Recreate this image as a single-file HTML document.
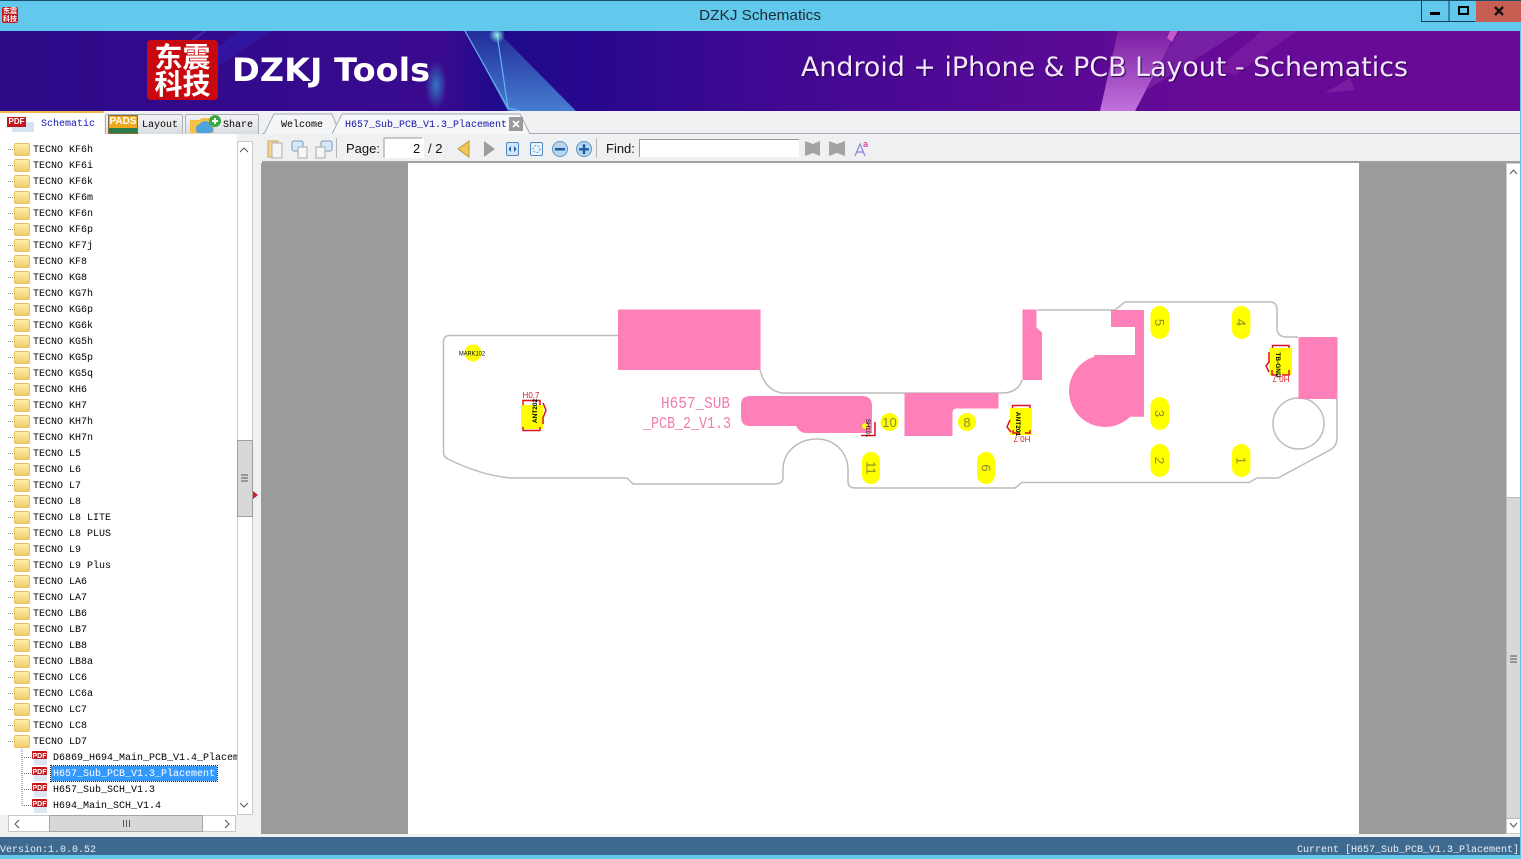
<!DOCTYPE html>
<html><head><meta charset="utf-8"><title>DZKJ Schematics</title>
<style>
*{box-sizing:border-box}
html,body{margin:0;padding:0;width:1521px;height:859px;overflow:hidden;background:#f0f0f0;font-family:"Liberation Sans",sans-serif}
.a{position:absolute}
.m{font-family:"Liberation Mono","Noto Sans CJK SC",monospace;font-size:10px;white-space:pre;color:#000}
#tree{left:0;top:143px;width:237px;height:672px;overflow:hidden}
#tree div{position:relative;height:16px;line-height:16px;padding-left:33px;font-family:"Liberation Mono",monospace;font-size:10px;white-space:pre;color:#000}
#tree div::before{content:"";position:absolute;left:14px;top:0;width:14px;height:11px;background:linear-gradient(#fdeea8,#f3cf6c);border:1px solid #e3c060;border-radius:2px}
#tree div::after{content:"";position:absolute;left:8px;top:6px;width:5px;border-top:1px dotted #888}
.f{position:absolute;left:53px;height:16px;line-height:16px;font-family:"Liberation Mono",monospace;font-size:10px;white-space:pre;color:#000}
.tab{position:absolute;top:114px;height:20px;background:linear-gradient(#f4f4f4,#d9dde2);border:1px solid #a9b2bb;border-bottom:0;border-radius:2px 2px 0 0}
</style></head><body>

<!-- title bar -->
<div class="a" style="left:0;top:0;width:1521px;height:31px;background:#62c9ec;border-top:1px solid #17506b"></div>
<div class="a" style="left:2px;top:7px;width:16px;height:16px;background:#c4161c;border-radius:2px;color:#fff;font:bold 7px/8px 'Noto Sans CJK SC',sans-serif;text-align:center">东震<br>科技</div>
<svg class="a" style="left:0;top:0" width="1521" height="31">
<text x="760" y="20" text-anchor="middle" font-family="Liberation Sans" font-size="15" fill="#1d2b33" textLength="122" lengthAdjust="spacingAndGlyphs">DZKJ Schematics</text>
<path d="M1421.5 1V21.5H1475.5M1449 1V21.5" fill="none" stroke="#123d55" stroke-width="1"/>
<rect x="1476" y="1" width="45" height="21" fill="#c65e52"/>
<rect x="1430" y="12" width="10" height="3" fill="#000"/>
<rect x="1459" y="7" width="9" height="7" fill="none" stroke="#000" stroke-width="2"/>
<path d="M1495 7L1503 15M1503 7L1495 15" stroke="#111" stroke-width="2.4"/>
</svg>

<!-- banner -->
<svg class="a" style="left:0;top:31px" width="1521" height="80" viewBox="0 31 1521 80">
<defs>
<linearGradient id="bg" x1="0" x2="1" y1="0" y2="0">
<stop offset="0" stop-color="#2b0a88"/><stop offset=".29" stop-color="#3a0a8e"/><stop offset=".325" stop-color="#1f0a8c"/><stop offset=".4" stop-color="#2a088e"/><stop offset=".5" stop-color="#3f0892"/><stop offset=".65" stop-color="#520a95"/><stop offset=".8" stop-color="#670a97"/><stop offset="1" stop-color="#680a96"/>
</linearGradient>
<linearGradient id="beam" x1="0" x2="0" y1="0" y2="1"><stop offset="0" stop-color="#22309c"/><stop offset="1" stop-color="#4a8ad8"/></linearGradient>
<radialGradient id="glow"><stop offset="0" stop-color="#2fa6d8" stop-opacity=".7"/><stop offset="1" stop-color="#2fa6d8" stop-opacity="0"/></radialGradient>
<radialGradient id="spark"><stop offset="0" stop-color="#8df0e8"/><stop offset="1" stop-color="#8df0e8" stop-opacity="0"/></radialGradient>
<linearGradient id="pb" x1="0" x2="0" y1="0" y2="1"><stop offset="0" stop-color="#7a1ea2"/><stop offset="1" stop-color="#c272dc"/></linearGradient>
</defs>
<rect x="0" y="31" width="1521" height="80" fill="url(#bg)"/>
<path d="M240 31L270 31L190 85L165 85Z" fill="#3018ac" opacity=".7"/>
<path d="M203 31L207 31L170 60L165 58Z" fill="#4a3ac0" opacity=".5"/>
<ellipse cx="436" cy="85" rx="11" ry="24" fill="url(#glow)"/>
<path d="M465 31L497 31L576 111L508 111Z" fill="url(#beam)" opacity=".9"/>
<path d="M465 31L508 108M497 34L508 108L520 111" fill="none" stroke="#63b4ea" stroke-width="1.2"/>
<circle cx="497" cy="35" r="8" fill="url(#spark)"/>
<path d="M1118 31L1177 31L1135 111L1100 111Z" fill="url(#pb)"/>
<path d="M1170 31L1178 31L1172 42L1167 38Z" fill="#d868d0" opacity=".8"/>
<path d="M1180 31L1240 31L1147 90L1160 62Z" fill="#7d2aa8" opacity=".7"/>
<path d="M1262 31L1297 31L1235 75L1215 70Z" fill="#7d1ca2" opacity=".8"/>
<path d="M1325 93L1350 78L1355 90Z" fill="#7d1ca2"/>
<text x="232" y="81" font-family="DejaVu Sans" font-weight="bold" font-size="32" fill="#fff" textLength="198" lengthAdjust="spacingAndGlyphs">DZKJ Tools</text>
<text x="801" y="76" font-family="DejaVu Sans" font-size="27" fill="#f4e6fa" textLength="607" lengthAdjust="spacingAndGlyphs" style="text-shadow:1px 1px 1px #2a0050">Android + iPhone &amp; PCB Layout - Schematics</text>
</svg>
<div class="a" style="left:147px;top:40px;width:71px;height:60px;background:#c80a10;border-radius:4px;color:#fff;font:bold 28px/27px 'Noto Sans CJK SC',sans-serif;text-align:center;padding-top:3px;letter-spacing:0">东震<br>科技</div>

<!-- tabs row -->
<div class="a" style="left:0;top:111px;width:1521px;height:24px;background:#f0f0f2"></div>
<div class="a" style="left:262px;top:133px;width:1259px;height:1px;background:#a4acb3"></div>
<div class="a" style="left:0;top:111px;width:104px;height:24px;background:#fff;border-top:2px solid #f2b34a"></div>
<div class="a" style="left:12px;top:122px;width:22px;height:10px;background:#d6e4f2"></div>
<div class="a" style="left:7px;top:117px;width:19px;height:10px;background:#c4141c;color:#fff;font:bold 8px/10px 'Liberation Sans';text-align:center">PDF</div>
<div class="a m" style="left:41px;top:118px;color:#1212b4;line-height:14px">Schematic</div>
<div class="tab" style="left:105px;width:78px"></div>
<div class="a" style="left:108px;top:115px;width:30px;height:19px;background:#f0a81e;border:1px solid #8a6a30;color:#fff;font:bold 10px/12px 'Liberation Sans';text-align:center">PADS<div style="height:5px;background:#2c7a4a"></div></div>
<div class="a m" style="left:142px;top:119px;line-height:14px">Layout</div>
<div class="tab" style="left:185px;width:74px"></div>
<svg class="a" style="left:189px;top:113px" width="34" height="21"><path d="M1 7H10L13 5H25V20H1Z" fill="#f6bf45"/><path d="M9 20a5 5 0 0 1 2-9 6 6 0 0 1 11 2 4 4 0 0 1 0 7Z" fill="#4ea3dc"/><circle cx="26" cy="8" r="6" fill="#39a83e"/><path d="M23 8H29M26 5V11" stroke="#fff" stroke-width="2"/></svg>
<div class="a m" style="left:223px;top:119px;line-height:14px">Share</div>
<svg class="a" style="left:262px;top:111px" width="280" height="24">
<path d="M2 23L12 3H70L78 23" fill="#f4f5f6" stroke="#a4acb3"/>
<path d="M70 23L80 3H258L268 23" fill="#f6f7f8" stroke="#a4acb3"/>
<rect x="247" y="6" width="14" height="14" fill="#9a9a9a"/>
<path d="M251 10L257 16M257 10L251 16" stroke="#fff" stroke-width="1.8"/>
</svg>
<div class="a m" style="left:281px;top:119px;line-height:14px">Welcome</div>
<div class="a m" style="left:345px;top:119px;line-height:14px;color:#1212a8">H657_Sub_PCB_V1.3_Placement</div>

<!-- toolbar -->
<div class="a" style="left:262px;top:134px;width:1259px;height:27px;background:#eff0f2"></div>
<div class="a" style="left:262px;top:161px;width:1259px;height:2px;background:#a0a0a0"></div>
<svg class="a" style="left:262px;top:134px" width="620" height="28">
<path d="M6 7H16V23H6Z" fill="#f2d59a" stroke="#c9a860"/><path d="M10 9H20V24H10Z" fill="#f4f4f4" stroke="#b0b0b0"/>
<rect x="30" y="7" width="11" height="10" rx="2" fill="#d8e8f6" stroke="#7a9cc0"/><rect x="36" y="13" width="9" height="11" fill="#f6f6f6" stroke="#aaa"/>
<rect x="59" y="7" width="11" height="10" rx="2" fill="#d8e8f6" stroke="#7a9cc0"/><rect x="54" y="13" width="9" height="11" fill="#f6f6f6" stroke="#aaa"/>
<path d="M74.500 4V24" stroke="#b5b5b5"/>
<rect x="122" y="4" width="40" height="20" fill="#fff"/>
<path d="M122 24V4H160" fill="none" stroke="#9a9a9a"/>
<path d="M207 7V23L196 15Z" fill="#f0c75a" stroke="#c09a3a"/>
<path d="M222 7V23L233 15Z" fill="#9c9c9c"/>
<rect x="244.500" y="8.500" width="12" height="13" rx="1.500" fill="#d4e6f6" stroke="#4f86c0"/>
<path d="M249 12V18L246.500 15ZM252 12V18L254.500 15Z" fill="#1f5f9f"/>
<rect x="268.500" y="8.500" width="12" height="13" rx="1.500" fill="#eaf2fa" stroke="#4f86c0"/>
<circle cx="274.500" cy="15" r="3.500" fill="none" stroke="#6a9cc8" stroke-dasharray="2 1.500"/>
<circle cx="298" cy="15" r="7.500" fill="#b6d6ee" stroke="#5f97c8"/><rect x="293" y="14" width="10" height="2.500" fill="#1f5f9f"/>
<circle cx="322" cy="15" r="7.500" fill="#b6d6ee" stroke="#5f97c8"/><path d="M317 15.300H327M322 10.300V20.300" stroke="#1f5f9f" stroke-width="2.400"/>
<path d="M334.500 4V24" stroke="#b5b5b5"/>
<rect x="377" y="5" width="160" height="18" fill="#fff"/>
<path d="M377.500 23V5.500H537" fill="none" stroke="#9a9a9a"/>
<path d="M543 7L551 10L558 7V22L551 19L543 22Z" fill="#a3a3a3"/>
<path d="M567 7L575 10L583 7V22L575 19L567 22Z" fill="#a3a3a3"/>
<path d="M593 22L598 10L603 22M595 18H601" fill="none" stroke="#8a80d8" stroke-width="1.200"/>
<text x="601" y="13" font-family="Liberation Sans" font-size="9" font-weight="bold" fill="#d0489a">a</text>
<text x="84" y="19" font-family="Liberation Sans" font-size="13" fill="#111">Page:</text>
<text x="151" y="19" font-family="Liberation Sans" font-size="13" fill="#111">2</text>
<text x="166" y="19" font-family="Liberation Sans" font-size="13" fill="#111">/ 2</text>
<text x="344" y="19" font-family="Liberation Sans" font-size="13" fill="#111">Find:</text>
</svg>

<!-- tree -->
<div class="a" style="left:0;top:134px;width:237px;height:681px;background:#fff"></div>
<div class="a" id="tree">
<div>TECNO KF6h</div><div>TECNO KF6i</div><div>TECNO KF6k</div><div>TECNO KF6m</div><div>TECNO KF6n</div><div>TECNO KF6p</div><div>TECNO KF7j</div><div>TECNO KF8</div><div>TECNO KG8</div><div>TECNO KG7h</div><div>TECNO KG6p</div><div>TECNO KG6k</div><div>TECNO KG5h</div><div>TECNO KG5p</div><div>TECNO KG5q</div><div>TECNO KH6</div><div>TECNO KH7</div><div>TECNO KH7h</div><div>TECNO KH7n</div><div>TECNO L5</div><div>TECNO L6</div><div>TECNO L7</div><div>TECNO L8</div><div>TECNO L8 LITE</div><div>TECNO L8 PLUS</div><div>TECNO L9</div><div>TECNO L9 Plus</div><div>TECNO LA6</div><div>TECNO LA7</div><div>TECNO LB6</div><div>TECNO LB7</div><div>TECNO LB8</div><div>TECNO LB8a</div><div>TECNO LC6</div><div>TECNO LC6a</div><div>TECNO LC7</div><div>TECNO LC8</div><div>TECNO LD7</div>
</div>
<svg class="a" style="left:0;top:745px" width="50" height="70">
<path d="M22 4V60M22 12.500H32M22 28.500H32M22 44.500H32M22 60.500H32" stroke="#777" stroke-dasharray="1 1" fill="none"/>
<g font-family="Liberation Sans" font-size="7" font-weight="bold" fill="#fff" text-anchor="middle">
<rect x="34" y="10" width="13" height="10" fill="#d9e6f3"/><rect x="32" y="6" width="15" height="8" rx="1" fill="#c4141c"/><text x="39.500" y="13">PDF</text>
<rect x="34" y="26" width="13" height="10" fill="#d9e6f3"/><rect x="32" y="22" width="15" height="8" rx="1" fill="#c4141c"/><text x="39.500" y="29">PDF</text>
<rect x="34" y="42" width="13" height="10" fill="#d9e6f3"/><rect x="32" y="38" width="15" height="8" rx="1" fill="#c4141c"/><text x="39.500" y="45">PDF</text>
<rect x="34" y="58" width="13" height="10" fill="#d9e6f3"/><rect x="32" y="54" width="15" height="8" rx="1" fill="#c4141c"/><text x="39.500" y="61">PDF</text>
</g>
</svg>
<div class="a" style="left:51px;top:766px;width:166px;height:15px;background:#3399ff;outline:1px dotted #123"></div>
<div style="position:absolute;left:0;top:0;width:237px;height:815px;overflow:hidden">
<div class="f" style="top:751px">D6869_H694_Main_PCB_V1.4_Placement</div>
<div class="f" style="top:767px;color:#fff">H657_Sub_PCB_V1.3_Placement</div>
<div class="f" style="top:783px">H657_Sub_SCH_V1.3</div>
<div class="f" style="top:799px">H694_Main_SCH_V1.4</div>
</div>

<!-- left scrollbars -->
<div class="a" style="left:237px;top:141px;width:16px;height:674px;background:#fff;border:1px solid #c8c8c8"></div>
<div class="a" style="left:237px;top:440px;width:16px;height:77px;background:#d8d8d8;border:1px solid #9f9f9f"></div>
<div class="a" style="left:8px;top:815px;width:228px;height:17px;background:#fff;border:1px solid #c8c8c8"></div>
<div class="a" style="left:49px;top:815px;width:154px;height:17px;background:#d8d8d8;border:1px solid #a5a5a5"></div>
<div class="a" style="left:0;top:832px;width:253px;height:5px;background:#f0f0f0"></div>
<svg class="a" style="left:0;top:140px" width="262" height="695">
<path d="M240 12L244 8L248 12M240 663L244 667L248 663" fill="none" stroke="#555"/>
<path d="M241 335H248M241 338H248M241 341H248" stroke="#555"/>
<path d="M253 351L258 355L253 359Z" fill="#d02030"/>
<path d="M19 680L15 684L19 688M225 680L229 684L225 688" fill="none" stroke="#555"/>
<path d="M123.500 680V687M126.500 680V687M129.500 680V687" stroke="#555"/>
</svg>

<!-- content -->
<div class="a" style="left:261px;top:163px;width:1245px;height:671px;background:#9b9b9b"></div>
<div class="a" style="left:408px;top:163px;width:951px;height:671px;background:#fff"></div>
<div class="a" style="left:1506px;top:163px;width:15px;height:671px;background:#fff;border:1px solid #ccc"></div>
<div class="a" style="left:1506px;top:497px;width:15px;height:322px;background:#d8d8d8;border:1px solid #bbb"></div>
<svg class="a" style="left:1506px;top:163px" width="15" height="671">
<path d="M4 11L7.500 7L11 11M4 660L7.500 664L11 660" fill="none" stroke="#555"/>
<path d="M4 493H11M4 496H11M4 499H11" stroke="#555"/>
</svg>

<!-- PCB -->
<svg class="a" style="left:0;top:0" width="1521" height="859">
<g fill="none" stroke="#bcbcbc" stroke-width="1.500">
<path d="M618 335.500H450Q443.500 335.500 443.500 342V452Q443.500 457 448 459Q480 475 510 478H627L633 484H775Q783 484 783 477V470C783 450 800 439 817 439C834 439 848 452 848 470V481Q848 488 855 488H1015L1022 482.500H1249L1257 478H1278L1330 450Q1337 446 1337 438V399"/>
<path d="M1298 337H1287Q1277 337 1277 328V310Q1277 302 1270 302H1125L1115 310H1037"/>
<path d="M1022 380Q1018 393 1002 393H782Q765 390 760 370"/>
<circle cx="1298.500" cy="423.500" r="25.500"/>
</g>
<g fill="#ff80b8">
<rect x="618" y="309.500" width="142.500" height="60.500"/>
<path d="M750 396H862Q872 396 872 406V433H806Q800 433 796 426H750Q741 426 741 417V405Q741 396 750 396Z"/>
<path d="M904.500 393H998.500V408.500H957Q952.500 408.500 952.500 413V436H904.500Z"/>
<path d="M1022.500 309.500H1036.500V327.500L1042 332.500V380H1022.500Z"/>
<path d="M1111 310H1144V416.700H1120L1105 391L1094 355H1135V327H1111Z"/>
<circle cx="1105" cy="391" r="36"/>
<rect x="1298.500" y="337" width="39" height="62"/>
</g>
<g fill="#ffff00">
<circle cx="473" cy="353" r="8.500"/>
<rect x="1150.500" y="306" width="18.500" height="33" rx="9.200"/>
<rect x="1232" y="306" width="18.500" height="33" rx="9.200"/>
<rect x="1150.500" y="397" width="18.500" height="33" rx="9.200"/>
<rect x="1150.500" y="444" width="18.500" height="33" rx="9.200"/>
<rect x="1232" y="444" width="18.500" height="33" rx="9.200"/>
<rect x="977" y="452" width="18" height="32" rx="9"/>
<rect x="862" y="452" width="18" height="32" rx="9"/>
<circle cx="889.500" cy="422" r="9"/>
<circle cx="967" cy="422" r="9"/>
<rect x="521" y="405" width="22" height="24"/>
<rect x="1010" y="408" width="22" height="27"/>
<rect x="1269" y="348" width="23" height="27"/>
<circle cx="865" cy="426" r="3"/>
</g>
<g font-family="Liberation Sans" font-size="13" fill="#8a8a30" text-anchor="middle">
<text transform="translate(1155,322.500) rotate(90)">5</text>
<text transform="translate(1236.500,322.500) rotate(90)">4</text>
<text transform="translate(1155,413.500) rotate(90)">3</text>
<text transform="translate(1155,460.500) rotate(90)">2</text>
<text transform="translate(1236.500,460.500) rotate(90)">1</text>
<text transform="translate(981.500,468) rotate(90)">6</text>
<text transform="translate(866.500,468) rotate(90)">11</text>
<text x="889.500" y="427">10</text>
<text x="967" y="427">8</text>
</g>
<g fill="none" stroke="#e01020" stroke-width="1.500">
<path d="M523 405V400.500H540V405M523 427V430.500H540V427M543 403L546 410L543 418V424"/>
<path d="M1012.500 408V405.500H1030V408M1013 430V433H1020M1025 433H1030V430M1010 420L1007 427L1011 432"/>
<path d="M1272.500 348V345.500H1289V348M1272 370V375H1278M1282 375H1289V370M1269 352V362L1266 366L1269 372"/>
<path d="M875 422V435.500H861"/>
</g>
<g font-family="Liberation Sans" font-size="6" fill="#000" text-anchor="middle">
<text x="472" y="355.500" font-size="6" textLength="26" lengthAdjust="spacingAndGlyphs">MARK102</text>
<text transform="translate(537,411) rotate(-90)" font-size="6.500" font-weight="bold">ANT202</text>
<text transform="translate(1016,424) rotate(90)" font-size="6.500" font-weight="bold">ANT201</text>
<text transform="translate(1276,365) rotate(90)" font-size="6.500" font-weight="bold">TB-GND</text>
<text transform="translate(866,428) rotate(90)" font-size="6">SH101</text>
</g>
<g font-family="Liberation Sans" font-size="8" fill="#e01020" text-anchor="middle">
<text x="531" y="398">H0.7</text>
<text transform="translate(1022,436) rotate(180)">H0.7</text>
<text transform="translate(1281,376) rotate(180)">H0.7</text>
</g>
<g font-family="Liberation Mono,monospace" font-size="17" fill="#f27db0">
<text x="661" y="408" textLength="69" lengthAdjust="spacingAndGlyphs">H657_SUB</text>
<text x="643" y="428" textLength="88" lengthAdjust="spacingAndGlyphs">_PCB_2_V1.3</text>
</g>
</svg>

<!-- status -->
<div class="a" style="left:0;top:834px;width:1521px;height:3px;background:#f0f0f0"></div>
<div class="a" style="left:0;top:837px;width:1521px;height:18px;background:#3f6a90"></div>
<div class="a" style="left:0;top:855px;width:1521px;height:4px;background:#62c9ec"></div>
<div class="a" style="left:1520px;top:31px;width:1px;height:828px;background:#62c9ec"></div>
<div class="a m" style="left:0;top:844px;line-height:14px;color:#e8eef4">Version:1.0.0.52</div>
<div class="a m" style="right:2px;top:844px;line-height:14px;color:#e8eef4">Current [H657_Sub_PCB_V1.3_Placement]</div>
</body></html>
